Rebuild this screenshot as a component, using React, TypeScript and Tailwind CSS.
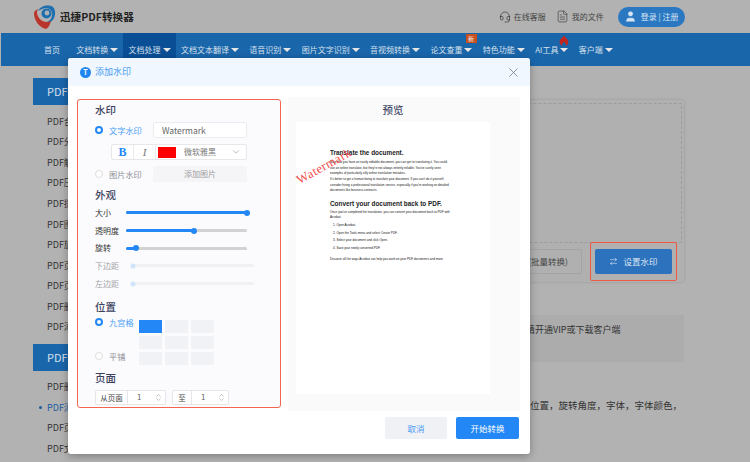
import { ChevronDown, ChevronsUpDown, FileText, Headset, User, X, ArrowRightLeft } from "lucide-react";

const navItems = ["文档转换", "文档处理", "文档文本翻译", "语音识别", "图片文字识别", "音视频转换", "论文查重", "特色功能", "AI工具", "客户端"];
const group1 = ["PDF合并", "PDF分割", "PDF解密", "PDF压缩", "PDF提取", "PDF图片获取", "PDF旋转", "PDF页面", "PDF页码", "PDF删除", "PDF添加"];
const group2 = ["PDF删除水印", "PDF添加水印", "PDF页面设置", "PDF文档"];

function Tri() {
  return <span className="h-0 w-0 border-x-[4px] border-t-[4px] border-x-transparent border-t-[#e6e6e6]" />;
}

function Title({ children, className }: { children: string; className: string }) {
  return <div className={`h-[14px] text-[10.5px] leading-[14px] font-medium text-[#3c4160] ${className}`}>{children}</div>;
}

function Radio({ on, label }: { on?: boolean; label: string }) {
  return (
    <div className="flex h-[12px] items-center gap-[6px] text-[8.2px] leading-none">
      {on ? (
        <span className="h-[8px] w-[8px] rounded-full border-[2.5px] border-[#2388f5] bg-white" />
      ) : (
        <span className="h-[8px] w-[8px] rounded-full border border-[#dddddd] bg-white" />
      )}
      <span className={on ? "text-[#4a9ef8]" : "text-[#8d8d95]"}>{label}</span>
    </div>
  );
}

function Slider({ label, pct, off }: { label: string; pct: number; off?: boolean }) {
  return (
    <div className="flex h-[17.7px] items-center">
      <span className={`shrink-0 text-[8px] leading-none ${off ? "w-[36px] text-[#a3a3a8]" : "w-[31px] text-[#333]"}`}>{label}</span>
      <div className={`relative h-[3px] rounded-full ${off ? "w-[123px] bg-[#f0f1f3]" : "w-[121px] bg-[#d2d2d2]"}`}>
        <div className={`h-full rounded-full ${off ? "bg-[#cfe4fb]" : "bg-[#2388f5]"}`} style={{ width: `${pct}%` }} />
        <span
          className={`absolute top-1/2 -translate-x-1/2 -translate-y-1/2 rounded-full ${off ? "h-[5px] w-[5px] bg-[#cfe4fb]" : "h-[6px] w-[6px] bg-[#2388f5]"}`}
          style={{ left: `${pct}%` }}
        />
      </div>
    </div>
  );
}

function Stepper({ label, labelW, w }: { label: string; labelW: string; w: string }) {
  return (
    <div className={`flex h-[15px] items-center rounded-[2px] border border-[#e6e6ea] bg-white text-[7.5px] text-[#444] ${w}`}>
      <span className={`flex h-full items-center justify-center border-r border-[#e6e6ea] ${labelW}`}>{label}</span>
      <span className="flex-1 pl-[9px] text-[8px] text-[#666]">1</span>
      <ChevronsUpDown size={9} strokeWidth={1.2} className="mr-[2px] text-[#888]" />
    </div>
  );
}

function Logo() {
  return (
    <svg width="24" height="26" viewBox="0 0 24 26" className="shrink-0">
      <path d="M5 7C7 2 15 0 20 3c3 3 3 10-1 14-3 2-7 3-10 2 4 0 9-2 10-7 1-4-1-7-5-8-4 0-7 2-9 3z" fill="#1d6fb0" />
      <circle cx="13.5" cy="9.5" r="5" fill="#1d6fb0" />
      <circle cx="14" cy="9" r="2.4" fill="#b2b2b2" />
      <path d="M1 9C1 7 3 6 5 5 3 8 4 11 6 14c3 4 8 5 12 3-1 4-3 7-5 8C7 24 1 17 1 9z" fill="#b9352c" />
    </svg>
  );
}

function FireIcon() {
  return (
    <svg width="10" height="11" viewBox="0 0 10 11" className="absolute top-[1.5px] right-[5px]">
      <path d="M5 0c.4 1.8 2 2.6 3.2 4.2C9.6 6 9.8 8 8.6 9.4 7.9 10.3 7 10.8 6.4 11c.8-1.2.6-2.4-1.4-4.2C3 8.6 2.8 9.8 3.6 11 2.8 10.7 1.8 10 1.2 9.1 0 7.3.5 5.3 1.8 3.9 3.2 2.6 4.8 1.6 5 0z" fill="#c4261d" />
    </svg>
  );
}

function Paragraph({ children, className }: { children: string; className: string }) {
  return <p className={`text-[3.05px] leading-[5.3px] font-medium text-[#111] ${className}`}>{children}</p>;
}

export default function App() {
  return (
    <div className="relative h-[462px] w-[750px] overflow-hidden bg-[#b2b2b2] font-['Noto_Sans_CJK_SC','Liberation_Sans',sans-serif]">
      <header className="flex h-[33px] items-center pl-[33px]">
        <Logo />
        <span className="ml-[3px] text-[10.6px] font-bold text-[#222]">迅捷PDF转换器</span>
        <div className="ml-[365px] flex items-center gap-[3px] text-[8px] text-[#444]">
          <Headset size={12} strokeWidth={1.4} className="text-[#3a3a3a]" />
          <span>在线客服</span>
        </div>
        <div className="ml-[10px] flex items-center gap-[3px] text-[8px] text-[#444]">
          <FileText size={13} strokeWidth={1.2} className="text-[#3a3a3a]" />
          <span>我的文件</span>
        </div>
        <div className="ml-[14px] flex h-[20px] w-[67px] items-center rounded-full bg-[#2b78c2] pl-[6px] text-[8px] text-[#d8e6f4]">
          <User size={13} fill="#d8e6f4" strokeWidth={1} />
          <span className="ml-[4px]">登录 | 注册</span>
        </div>
      </header>

      <nav className="ml-[1px] flex h-[33px] items-center bg-[#1a66ab] pl-[37.5px] text-[8px] text-[#d5e0ec]">
        <span className="mr-[5.5px] px-[5.5px]">首页</span>
        {navItems.map((item) => (
          <div
            key={item}
            className={`relative flex h-full items-center gap-[2px] px-[5.2px] ${item === "文档处理" ? "bg-[#0a4f96]" : ""}`}
          >
            <span>{item}</span>
            <Tri />
            {item === "论文查重" && (
              <span className="absolute top-[1px] right-[1px] flex h-[9px] w-[11px] items-center justify-center bg-[#c8501e] text-[6px] leading-none text-[#eee]">新</span>
            )}
            {item === "AI工具" && <FireIcon />}
          </div>
        ))}
      </nav>

      <div className="flex pt-[12px] pl-[33px]">
        <aside className="w-[165px] shrink-0 text-[9px] text-[#333]">
          <div className="flex h-[27px] items-center bg-[#1a66ab] pl-[14px] text-[11px] text-[#d5e0ec]">PDF编辑</div>
          <div className="pt-[6px]">
            {group1.map((g) => (
              <div key={g} className="flex h-[20.6px] items-center pl-[14px]">{g}</div>
            ))}
          </div>
          <div className="mt-[6px] flex h-[27px] items-center bg-[#1a66ab] pl-[14px] text-[11px] text-[#d5e0ec]">PDF安全</div>
          <div className="pt-[6px]">
            {group2.map((g, i) => (
              <div key={g} className={`relative flex h-[20.6px] items-center pl-[14px] ${i === 1 ? "text-[#1a5da0]" : ""}`}>
                {i === 1 && <span className="absolute left-[6px] h-[3px] w-[3px] rounded-full bg-[#1a5da0]" />}
                {g}
              </div>
            ))}
          </div>
        </aside>

        <main className="ml-[20px] w-[466px] pt-[22px]">
          <div className="h-[182px] rounded-[3px] bg-[#b0b0b0] p-[3px] pr-[2px] shadow-[0_0_3px_rgba(0,0,0,0.15)]">
            <div className="h-[140px] rounded-[2px] border-[1.5px] border-dashed border-[#9c9c9c]" />
            <div className="-mt-[1px] flex justify-end pr-[5px]">
              <div className="flex h-[25px] w-[150px] items-center justify-end self-center rounded-[2px] border border-[#a4a4a4] pr-[13px] text-[8.5px] text-[#444]">(批量转换)</div>
              <div className="ml-[8px] flex h-[39px] w-[87px] items-center justify-center rounded-[2px] border border-[#ee5a44]">
                <div className="flex h-[25px] w-[77px] items-center justify-center gap-[5px] rounded-[2px] bg-[#2d72bd] text-[8.5px] text-[#dbe6f2]">
                  <ArrowRightLeft size={9} strokeWidth={1.6} />
                  设置水印
                </div>
              </div>
            </div>
          </div>
          <div className="mt-[33px] h-[47px] bg-[#acacac] pt-[8px] pl-[308px] text-[9px] text-[#333]">请开通VIP或下载客户端</div>
          <div className="mt-[36px] pr-[2px] text-right text-[9.5px] text-[#333]">添加水印，可设置水印坐标位置，旋转角度，字体，字体颜色，</div>
        </main>
      </div>

      <div role="dialog" className="absolute top-[58px] left-[68px] h-[396px] w-[462px] rounded-[3px] bg-white shadow-[0_2px_8px_rgba(0,0,0,0.3)]">
        <div className="flex h-[28px] items-center rounded-t-[3px] bg-[#f0f7fe] pr-[9px] pl-[12px]">
          <span className="flex h-[11px] w-[11px] items-center justify-center rounded-full bg-[#1f85f0] text-[7px] leading-none font-bold text-white">T</span>
          <span className="ml-[4px] text-[9px] text-[#4a9bf3]">添加水印</span>
          <X size={15} strokeWidth={1.1} className="ml-auto text-[#666]" />
        </div>

        <div className="flex items-start pt-[11px] pl-[9px]">
          <section className="mt-[2px] h-[309px] w-[204px] shrink-0 rounded-[3px] border-[1.5px] border-[#f4654f] bg-[#fbfbfd] pl-[17px]">
            <Title className="mt-[3px]">水印</Title>
            <div className="mt-[5px] flex items-center">
              <div className="w-[58px]"><Radio on label="文字水印" /></div>
              <div className="flex h-[16px] w-[94px] items-center rounded-[2px] border border-[#ececf0] bg-white pl-[8px] text-[8.5px] text-[#666]">Watermark</div>
            </div>
            <div className="mt-[6px] ml-[16px] flex h-[16px] w-[136px] items-center rounded-[2px] border border-[#e8e8ec] bg-white">
              <span className="flex h-full w-[22px] items-center justify-center border-r border-[#ececf0] font-['Liberation_Serif',serif] text-[12px] font-bold text-[#2388f5]">B</span>
              <span className="flex h-full w-[22px] items-center justify-center border-r border-[#ececf0] font-['Liberation_Serif',serif] text-[11px] text-[#777] italic">I</span>
              <span className="ml-[2px] h-[11px] w-[18px] bg-[#ff0000]" />
              <span className="ml-[8px] text-[8px] text-[#777]">微软雅黑</span>
              <ChevronDown size={10} strokeWidth={1.2} className="mr-[5px] ml-auto text-[#777]" />
            </div>
            <div className="mt-[6px] flex items-center">
              <div className="w-[58px]"><Radio label="图片水印" /></div>
              <div className="flex h-[16px] w-[94px] items-center justify-center rounded-[2px] bg-[#f5f5f7] text-[8px] text-[#9a9aa0]">添加图片</div>
            </div>
            <Title className="mt-[6px]">外观</Title>
            <div className="mt-[2px]">
              <Slider label="大小" pct={100} />
              <Slider label="透明度" pct={56} />
              <Slider label="旋转" pct={8} />
              <Slider label="下边距" pct={2} off />
              <Slider label="左边距" pct={2} off />
            </div>
            <Title className="mt-[7.5px]">位置</Title>
            <div className="mt-[2px] flex">
              <div className="flex h-[46px] w-[44px] flex-col justify-between">
                <Radio on label="九宫格" />
                <Radio label="平铺" />
              </div>
              <div className="mt-[4px] grid grid-cols-[23px_23px_23px] grid-rows-[13px_13px_13px] gap-x-[3px] gap-y-[3px]">
                {Array.from({ length: 9 }).map((_, i) => (
                  <span key={i} className={i === 0 ? "bg-[#2388f5]" : "bg-[#f1f2f5]"} />
                ))}
              </div>
            </div>
            <Title className="mt-[6px]">页面</Title>
            <div className="mt-[5px] flex gap-[6px]">
              <Stepper label="从页面" labelW="w-[32px]" w="w-[71px]" />
              <Stepper label="至" labelW="w-[19px]" w="w-[57px]" />
            </div>
          </section>

          <section className="ml-[7px] h-[314px] w-[232px] bg-[#fafafb] pl-[8px]">
            <div className="flex h-[25px] w-[194px] items-center justify-center text-[10.5px] font-medium text-[#4a4f6a]">预览</div>
            <div className="relative h-[272px] w-[194px] bg-white pt-[26px] pr-[38px] pl-[34px] font-['Liberation_Sans',sans-serif]">
              <h2 className="text-[6.4px] leading-[10px] font-bold whitespace-nowrap text-[#222]">Translate the document.</h2>
              <Paragraph className="mt-[2.4px]">Now that you have an easily editable document, you can get to translating it. You could use an online translator, but they're not always entirely reliable. You've surely seen examples of particularly silly online translation mistakes.</Paragraph>
              <Paragraph className="mt-[1px]">It's better to get a human being to translate your document. If you can't do it yourself, consider hiring a professional translation service, especially if you're working on detailed documents like business contracts.</Paragraph>
              <h2 className="mt-[5.6px] text-[6.4px] leading-[10px] font-bold whitespace-nowrap text-[#222]">Convert your document back to PDF.</h2>
              <Paragraph className="mt-[1.4px]">Once you've completed the translation, you can convert your document back to PDF with Acrobat.</Paragraph>
              <Paragraph className="mt-[2.3px] pl-[3px]">1. Open Acrobat.</Paragraph>
              <Paragraph className="mt-[2.7px] pl-[3px]">2. Open the Tools menu and select Create PDF.</Paragraph>
              <Paragraph className="mt-[2px] pl-[3px]">3. Select your document and click Open.</Paragraph>
              <Paragraph className="mt-[2.7px] pl-[3px]">4. Save your newly converted PDF.</Paragraph>
              <Paragraph className="mt-[5.7px]">Discover all the ways Acrobat can help you work on your PDF documents and more.</Paragraph>
              <span className="absolute top-[35px] left-[-2px] -rotate-[29deg] font-['Liberation_Serif',serif] text-[12.5px] tracking-[0.6px] text-[#f04a4a]">Watermark</span>
            </div>
          </section>
        </div>

        <div className="flex justify-end gap-[9px] pt-[6px] pr-[11px]">
          <div className="flex h-[22px] w-[62px] items-center justify-center rounded-[2px] bg-[#eff1f5] text-[8.5px] text-[#4a9bf3]">取消</div>
          <div className="flex h-[22px] w-[63px] items-center justify-center rounded-[2px] bg-[#2388f5] text-[8.5px] text-white">开始转换</div>
        </div>
      </div>
    </div>
  );
}
